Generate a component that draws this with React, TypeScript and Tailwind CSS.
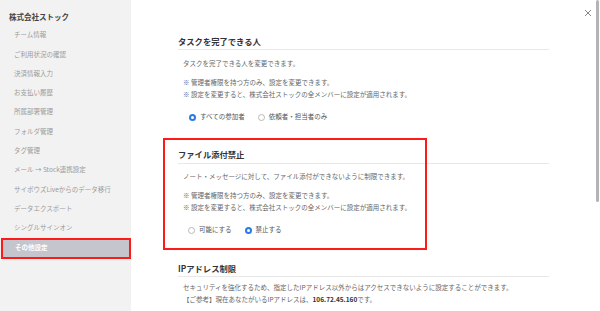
import React from 'react'

const font = { fontFamily: '"Noto Sans CJK JP", "Noto Sans", sans-serif' }

const menu = [
  'チーム情報',
  'ご利用状況の確認',
  '決済情報入力',
  'お支払い履歴',
  '所属部署管理',
  'フォルダ管理',
  'タグ管理',
  'メール → Stock連携設定',
  'サイボウズLiveからのデータ移行',
  'データエクスポート',
  'シングルサインオン',
]

function Radio({ checked, label }: { checked: boolean; label: string }) {
  return (
    <label className="flex items-center gap-[4px]">
      {checked ? (
        <span className="w-[7px] h-[7px] rounded-full bg-[#2a7be4] flex items-center justify-center">
          <span className="w-[3px] h-[3px] rounded-full bg-white" />
        </span>
      ) : (
        <span className="w-[7px] h-[7px] rounded-full border border-[#b8b8b8] bg-white" />
      )}
      <span>{label}</span>
    </label>
  )
}

function Heading({ children, className }: { children: React.ReactNode; className?: string }) {
  return (
    <h2 className={'text-[8.3px] leading-[12px] font-bold text-[#333] pb-[2px] border-b border-[#e8e8e8] ' + (className || '')}>
      {children}
    </h2>
  )
}

function Notes() {
  return (
    <div className="pl-[5px] mt-[7px] leading-[12px]">
      <div>※ 管理者権限を持つ方のみ、設定を変更できます。</div>
      <div>※ 設定を変更すると、株式会社ストックの全メンバーに設定が適用されます。</div>
    </div>
  )
}

export default function App() {
  return (
    <div className="w-[600px] h-[311px] flex overflow-hidden bg-white relative" style={font}>
      {/* Sidebar */}
      <aside className="w-[131px] shrink-0 bg-[#f2f2f2] pt-[11px]">
        <div className="pl-[9px] text-[7.5px] leading-[12px] font-bold text-[#444]">株式会社ストック</div>
        <ul className="mt-[2.5px]">
          {menu.map(m => (
            <li key={m} className="h-[19.3px] flex items-center pl-[14px] text-[6.5px] text-[#9a9a9a]">
              {m}
            </li>
          ))}
          <li className="h-[21px] ml-[1px] flex items-center pl-[12px] text-[6.5px] font-bold text-white bg-[#c4c5cd] border-2 border-[#ff1a1a]">
            その他設定
          </li>
        </ul>
      </aside>

      {/* Main */}
      <main className="flex-1 pl-[47px] pt-[35px] text-[6.5px] text-[#666]">
        <div className="w-[371px]">
          <section>
            <Heading>タスクを完了できる人</Heading>
            <p className="pl-[5px] mt-[7px] leading-[12px]">タスクを完了できる人を変更できます。</p>
            <Notes />
            <div className="pl-[11px] mt-[11px] h-[12px] flex items-center gap-[13px] text-[#555]">
              <Radio checked label="すべての参加者" />
              <Radio checked={false} label="依頼者・担当者のみ" />
            </div>
          </section>

          <section className="mt-[25px]">
            <Heading className="pb-[3px]">ファイル添付禁止</Heading>
            <p className="pl-[5px] mt-[6px] leading-[12px]">ノート・メッセージに対して、ファイル添付ができないように制限できます。</p>
            <Notes />
            <div className="pl-[10px] mt-[11px] h-[12px] flex items-center gap-[13px] text-[#555]">
              <Radio checked={false} label="可能にする" />
              <Radio checked label="禁止する" />
            </div>
          </section>

          <section className="mt-[26px]">
            <Heading className="pb-[1px]">IPアドレス制限</Heading>
            <div className="pl-[5px] mt-[4px] leading-[12px]">
              <div>セキュリティを強化するため、指定したIPアドレス以外からはアクセスできないように設定することができます。</div>
              <div>
                【ご参考】現在あなたがいるIPアドレスは、<span className="font-bold text-[#333]">106.72.45.160</span>です。
              </div>
            </div>
          </section>
        </div>
      </main>

      {/* annotation box */}
      <div className="absolute left-[163px] top-[138px] w-[264px] h-[112px] border-2 border-[#ff1a1a] pointer-events-none" />

      {/* close button */}
      <button className="absolute right-[8px] top-[9px] text-[#888]">
        <svg width="8" height="8" viewBox="0 0 8 8" stroke="currentColor" strokeWidth="1">
          <path d="M1 1L7 7M7 1L1 7" />
        </svg>
      </button>

      {/* scrollbar */}
      <div className="absolute right-[1px] top-0 w-[3px] h-[202px] rounded-full bg-[#b4b4b4]" />
    </div>
  )
}
